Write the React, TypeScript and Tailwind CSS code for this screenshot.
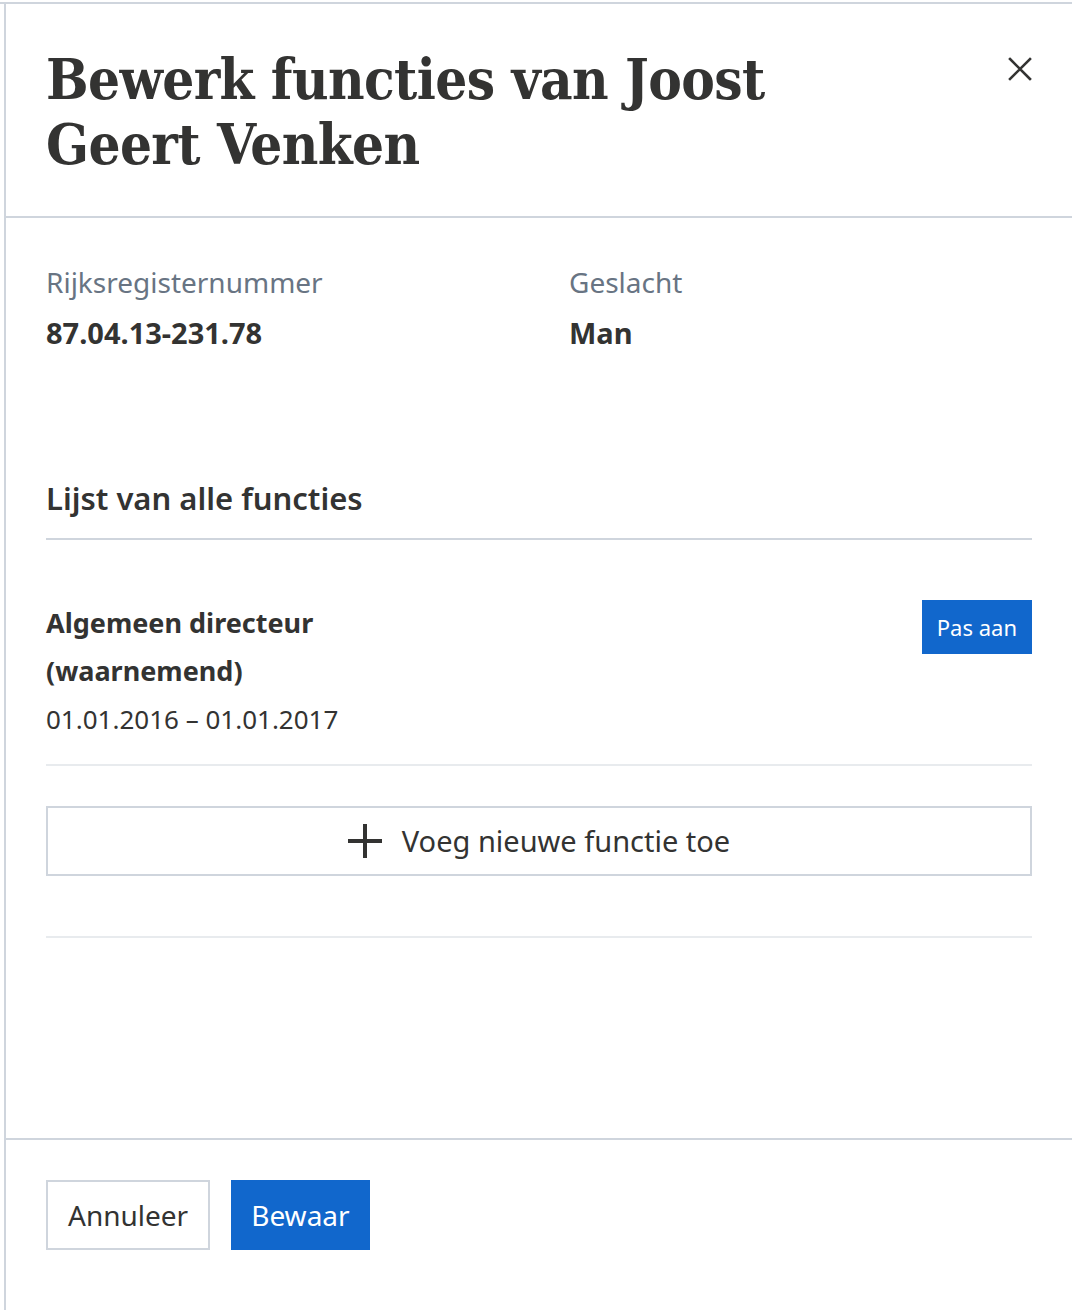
const sans = "font-['Noto_Sans',sans-serif]";

function CloseIcon() {
  return (
    <svg width="24" height="24" viewBox="0 0 24 24" fill="none" stroke="currentColor" strokeWidth={2.6} strokeLinecap="square">
      <path d="M2 2L22 22M22 2L2 22" />
    </svg>
  );
}

function PlusIcon() {
  return (
    <svg width="34" height="34" viewBox="0 0 34 34" fill="none" stroke="currentColor" strokeWidth={4}>
      <path d="M17 0V34M0 17H34" />
    </svg>
  );
}

export default function App() {
  return (
    <div className={`min-h-[1310px] bg-white text-[#333332] ${sans}`}>
      <div className="h-[2px] bg-white" />
      <div className="h-[2px] bg-[#cfd5dd]" />
      <div className="ml-[4px] flex min-h-[1306px] flex-col border-l-2 border-[#cfd5dd]">
        <header className="flex items-start justify-between border-b-2 border-[#cfd5dd] px-[40px] pt-[43px] pb-[39px]">
          <h1 className="max-w-[740px] font-['DejaVu_Serif',serif] text-[56px] leading-[65px] font-bold tracking-[-0.6px] font-stretch-condensed">
            Bewerk functies van Joost Geert Venken
          </h1>
          <button className="mt-[10px] text-[#333332]">
            <CloseIcon />
          </button>
        </header>

        <main className="flex-1 px-[40px] pt-[44px]">
          <div className="grid grid-cols-2">
            <div>
              <div className="text-[28px] leading-[40px] text-[#687483]">Rijksregisternummer</div>
              <div className="mt-[11px] text-[29px] leading-[40px] font-bold">87.04.13-231.78</div>
            </div>
            <div className="pl-[30px]">
              <div className="text-[28px] leading-[40px] text-[#687483]">Geslacht</div>
              <div className="mt-[11px] text-[29px] leading-[40px] font-bold">Man</div>
            </div>
          </div>

          <h2 className="mt-[125px] border-b-2 border-[#cfd5dd] pb-[20px] text-[31px] leading-[40px] font-semibold">
            Lijst van alle functies
          </h2>

          <div className="flex items-start justify-between border-b-2 border-[#e8ebee] pt-[59px] pb-[21px]">
            <div className="max-w-[400px]">
              <div className="text-[27px] leading-[48px] font-bold">Algemeen directeur (waarnemend)</div>
              <div className="text-[26px] leading-[48px]">01.01.2016 – 01.01.2017</div>
            </div>
            <button className="mt-[1px] h-[54px] bg-[#1167cc] px-[15px] text-[22px] text-white">Pas aan</button>
          </div>

          <button className="mt-[40px] flex h-[70px] w-full items-center justify-center gap-[20px] border-2 border-[#cfd5dd] text-[29px]">
            <PlusIcon />
            Voeg nieuwe functie toe
          </button>

          <div className="mt-[60px] h-[2px] bg-[#e8ebee]" />
        </main>

        <footer className="flex h-[172px] gap-[21px] border-t-2 border-[#cfd5dd] px-[40px] pt-[40px]">
          <button className="h-[70px] border-2 border-[#cfd5dd] px-[20px] text-[28px]">Annuleer</button>
          <button className="h-[70px] bg-[#1167cc] px-[20px] text-[28px] text-white">Bewaar</button>
        </footer>
      </div>
    </div>
  );
}
